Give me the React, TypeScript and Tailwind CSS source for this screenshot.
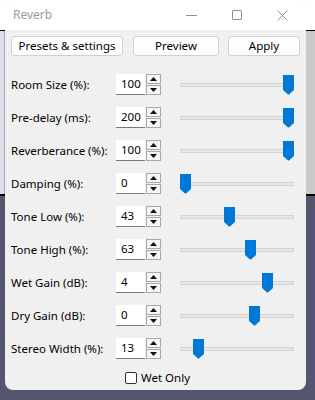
import React from "react";

type Param = { label: string; value: string; frac: number };

const params: Param[] = [
  { label: "Room Size (%):", value: "100", frac: 1 },
  { label: "Pre-delay (ms):", value: "200", frac: 1 },
  { label: "Reverberance (%):", value: "100", frac: 1 },
  { label: "Damping (%):", value: "0", frac: 0 },
  { label: "Tone Low (%):", value: "43", frac: 0.43 },
  { label: "Tone High (%):", value: "63", frac: 0.63 },
  { label: "Wet Gain (dB):", value: "4", frac: 0.8 },
  { label: "Dry Gain (dB):", value: "0", frac: 0.667 },
  { label: "Stereo Width (%):", value: "13", frac: 0.13 },
];

const font = { fontFamily: '"Noto Sans", "Open Sans", sans-serif' };

function Spinner() {
  return (
    <div className="flex flex-col gap-px w-[15px] ml-px">
      <div className="h-[10px] border border-[#a8a8a8] bg-[#f5f5f5] flex items-center justify-center">
        <svg width="7" height="4" viewBox="0 0 7 4">
          <path d="M0 4 L3.5 0 L7 4 Z" fill="#111" />
        </svg>
      </div>
      <div className="h-[10px] border border-[#a8a8a8] bg-[#f5f5f5] flex items-center justify-center">
        <svg width="7" height="4" viewBox="0 0 7 4">
          <path d="M0 0 L7 0 L3.5 4 Z" fill="#111" />
        </svg>
      </div>
    </div>
  );
}

function Slider({ frac }: { frac: number }) {
  return (
    <div className="relative w-[114px] h-[20px] flex items-center">
      <div className="w-full h-[4px] bg-[#e6e6e6] border border-[#d4d6d4]" />
      <svg
        className="absolute top-0"
        style={{ left: Math.round(frac * 103) }}
        width="11"
        height="20"
        viewBox="0 0 11 20"
      >
        <path d="M0 0 H11 V15 L6 19.5 H5 L0 15 Z" fill="#0078d7" />
      </svg>
    </div>
  );
}

function Row({ p }: { p: Param }) {
  return (
    <div className="h-[33px] flex items-center">
      <div className="w-[105px] text-[11.5px] text-black">{p.label}</div>
      <div className="w-[29px] h-[21px] bg-white border-b border-[#7a7a7a] flex items-center pl-[5px] text-[11.5px] text-black">
        {p.value}
      </div>
      <Spinner />
      <div className="ml-[19px]">
        <Slider frac={p.frac} />
      </div>
    </div>
  );
}

function Btn({ label, w }: { label: string; w: string }) {
  return (
    <div
      className={`${w} h-[20px] bg-[#fdfdfd] border border-[#d0d0d0] rounded-[3px] flex items-center justify-center text-[11.5px] text-black`}
    >
      {label}
    </div>
  );
}

export default function App() {
  return (
    <div className="relative w-[315px] h-[400px] overflow-hidden" style={font}>
      {/* desktop behind the dialog */}
      <div className="flex flex-col h-full">
        <div className="h-[30px] bg-white" />
        <div className="h-px bg-black" />
        <div className="h-[163px] flex justify-between">
          <div className="w-[5px] bg-[#dedee8] border-r border-[#a8a8b4]" />
          <div className="w-[9px] bg-[#c9c9c9]" />
        </div>
        <div className="h-[2px] bg-black" />
        <div className="flex-1 bg-[#545670]" />
      </div>

      {/* dialog */}
      <div className="absolute left-[5px] top-0 w-[301px] h-[390px] rounded-lg overflow-hidden bg-[#f0f0f0] flex flex-col">
        <div className="h-[30px] bg-white flex items-center">
          <span className="pl-[8px] text-[12px] text-[#999999]">Reverb</span>
          <div className="ml-auto flex items-center">
            <div className="w-[46px] flex justify-center">
              <div className="w-[11px] h-px bg-[#8f8f8f]" />
            </div>
            <div className="w-[46px] flex justify-center">
              <div className="w-[10px] h-[10px] border border-[#8f8f8f] rounded-[1px]" />
            </div>
            <div className="w-[46px] flex justify-center pr-[2px]">
              <svg width="11" height="11" viewBox="0 0 11 11">
                <path d="M0.5 0.5 L10.5 10.5 M10.5 0.5 L0.5 10.5" stroke="#8f8f8f" strokeWidth="1" />
              </svg>
            </div>
          </div>
        </div>

        <div className="px-[6px] pt-[6px] flex items-center">
          <Btn label="Presets & settings" w="w-[112px]" />
          <div className="ml-[10px]">
            <Btn label="Preview" w="w-[86px]" />
          </div>
          <div className="ml-[9px]">
            <Btn label="Apply" w="w-[72px]" />
          </div>
        </div>

        <div className="px-[6px] pt-[12px] flex flex-col">
          {params.map((p) => (
            <Row key={p.label} p={p} />
          ))}
        </div>

        <div className="flex items-center justify-center pt-[4px] pl-[4px]">
          <div className="w-[12px] h-[12px] border border-[#333] rounded-[2px] bg-white" />
          <span className="ml-[4px] text-[11.5px] text-black">Wet Only</span>
        </div>
      </div>
    </div>
  );
}
